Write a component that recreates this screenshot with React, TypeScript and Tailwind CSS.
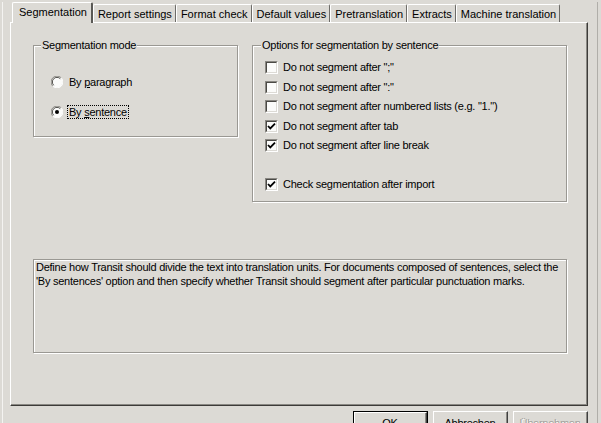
import React from "react";

const BG = "bg-[#dcdad5]";

function Radio({ checked }: { checked?: boolean }) {
  return (
    <svg width="12" height="12" viewBox="0 0 12 12" className="shrink-0">
      <circle cx="6" cy="6" r="5.5" fill="#fbfbfa" />
      <path d="M10.2 1.8 A5.5 5.5 0 0 0 1.8 10.2" fill="none" stroke="#8a8883" strokeWidth="1" />
      <path d="M9.3 2.7 A4.5 4.5 0 0 0 2.7 9.3" fill="none" stroke="#4a4945" strokeWidth="1" />
      <path d="M1.8 10.2 A5.5 5.5 0 0 0 10.2 1.8" fill="none" stroke="#ffffff" strokeWidth="1" />
      {checked && <circle cx="6" cy="6" r="2" fill="#000" />}
    </svg>
  );
}

function Check({ checked }: { checked?: boolean }) {
  return (
    <div className="w-[13px] h-[13px] shrink-0 border-t border-l border-t-[#8a8883] border-l-[#8a8883] border-r border-b border-r-white border-b-white">
      <div className="w-full h-full border-t border-l border-t-[#4a4945] border-l-[#4a4945] border-r border-b border-r-[#dcdad5] border-b-[#dcdad5] bg-[#fbfbfa] flex items-center justify-center">
        {checked && (
          <svg width="9" height="9" viewBox="0 0 9 9">
            <polyline points="1,4 3.3,6.4 8,1.6" fill="none" stroke="#000" strokeWidth="1.8" />
          </svg>
        )}
      </div>
    </div>
  );
}

function Tab({ label, selected }: { label: string; selected?: boolean }) {
  if (selected) {
    return (
      <div className={`relative z-10 h-[21px] -mb-[1px] ${BG} border-t border-l border-t-white border-l-white border-r-2 border-r-[#5a5955] pl-[6px] pr-[4px] pt-[3px] leading-[13px] rounded-tl-[2px] rounded-tr-[2px]`}>
        {label}
      </div>
    );
  }
  return (
    <div className="h-[18px] border-t border-l border-t-white border-l-white border-r border-r-[#6d6c68] pl-[4px] pr-[3px] pt-[3px] leading-[13px] rounded-tl-[2px] rounded-tr-[2px]">
      {label}
    </div>
  );
}

function Button({ label, def, disabled }: { label: string; def?: boolean; disabled?: boolean }) {
  const inner = (
    <div className="w-full h-full border-t border-l border-t-white border-l-white border-r border-b border-r-[#404040] border-b-[#404040]">
      <div
        className={`w-full h-full border-r border-b border-r-[#8a8883] border-b-[#8a8883] flex items-center justify-center pt-[2px] ${
          disabled ? "text-[#a3a19c] [text-shadow:1px_1px_0_#fff]" : "text-black"
        }`}
      >
        {label}
      </div>
    </div>
  );
  return (
    <div className={`w-[75px] h-[23px] ${def ? "border border-black" : ""}`}>{inner}</div>
  );
}

export default function App() {
  const tabs = [
    "Segmentation",
    "Report settings",
    "Format check",
    "Default values",
    "Pretranslation",
    "Extracts",
    "Machine translation",
  ];
  const checks: [string, boolean][] = [
    ['Do not segment after ";"', false],
    ['Do not segment after ":"', false],
    ['Do not segment after numbered lists (e.g. "1.")', false],
    ["Do not segment after tab", true],
    ["Do not segment after line break", true],
  ];
  return (
    <div
      className={`w-[601px] h-[423px] overflow-hidden ${BG} text-black text-[11px] leading-[13px] pl-[2px]`}
      style={{ fontFamily: '"Liberation Sans", Arial, sans-serif' }}
    >
      <div className="w-[596px] h-[423px] border-l border-l-[#f4f3f1] border-r border-r-[#b0aea9]">
        <div className="ml-[7px] w-[578px]">
          {/* tabs */}
          <div className="h-[20px] mt-[2px] ml-[2px] flex items-end">
            {tabs.map((t, i) => (
              <Tab key={t} label={t} selected={i === 0} />
            ))}
          </div>
          {/* panel */}
          <div className="h-[384px] border-t border-l border-t-white border-l-white border-r border-b border-r-[#3c3b38] border-b-[#3c3b38] shadow-[inset_-1px_-1px_0_#8a8883] pl-[22px] pt-[22px] tracking-[-0.25px]">
            <div className="flex items-start gap-[14px]">
              {/* group 1 */}
              <div className="w-[205px] h-[92px] border border-[#9a9893] shadow-[1px_1px_0_#fff,inset_1px_1px_0_#fff]">
                <div className={`-mt-[7px] ml-[7px] px-[1px] w-fit ${BG}`}>Segmentation mode</div>
                <div className="pl-[17px] mt-[22px] flex items-center h-[16px]">
                  <Radio />
                  <span className="ml-[6px]">
                    By <u className="underline-offset-[1px]">p</u>aragraph
                  </span>
                </div>
                <div className="pl-[17px] mt-[14px] flex items-center h-[16px]">
                  <Radio checked />
                  <span className="ml-[4px] px-[1px] border border-dotted border-black leading-[12px]">
                    By <u className="underline-offset-[1px]">s</u>entence
                  </span>
                </div>
              </div>
              {/* group 2 */}
              <div className="w-[315px] h-[157px] border border-[#9a9893] shadow-[1px_1px_0_#fff,inset_1px_1px_0_#fff]">
                <div className={`-mt-[7px] ml-[8px] px-[1px] w-fit ${BG}`}>
                  Options for segmentation by sentence
                </div>
                <div className="mt-[6px] pl-[12px]">
                  {checks.map(([t, c]) => (
                    <div key={t} className="h-[19.5px] flex items-center">
                      <Check checked={c} />
                      <span className="ml-[5px]">{t}</span>
                    </div>
                  ))}
                  <div className="h-[19.5px]" />
                  <div className="h-[19.5px] flex items-center">
                    <Check checked />
                    <span className="ml-[5px]">Check segmentation after import</span>
                  </div>
                </div>
              </div>
            </div>
            {/* description */}
            <div className="mt-[57px] w-[534px] h-[94px] border border-[#9a9893] shadow-[1px_1px_0_#fff,inset_1px_1px_0_#fff] pl-[2px] pt-0 leading-[14px] whitespace-nowrap overflow-hidden">
              Define how Transit should divide the text into translation units. For documents composed of sentences, select the
              <br />
              'By sentences' option and then specify whether Transit should segment after particular punctuation marks.
            </div>
          </div>
          {/* buttons */}
          <div className="mt-[5px] flex justify-end gap-[5px] tracking-[-0.25px]">
            <Button label="OK" def />
            <Button label="Abbrechen" />
            <Button label="Übernehmen" disabled />
          </div>
        </div>
      </div>
    </div>
  );
}
